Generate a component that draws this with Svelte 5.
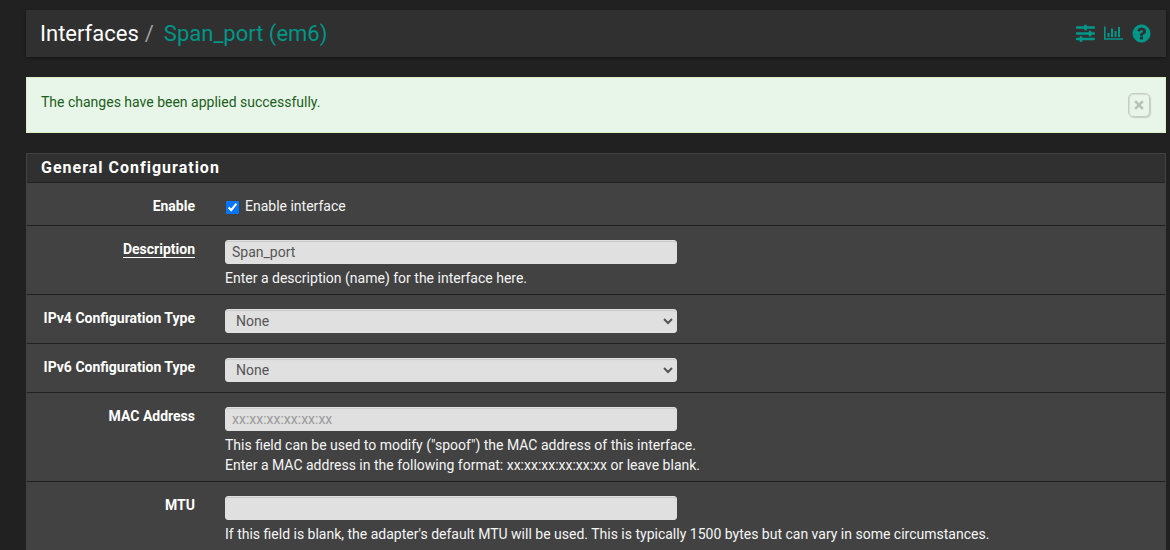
<script>
  let enabled = $state(true);
  let description = $state('Span_port');
  let ipv4 = $state('None');
  let ipv6 = $state('None');
  let mac = $state('');
  let mtu = $state('');
  let showAlert = $state(true);
  const types = ['None', 'Static', 'DHCP'];
</script>

<div class="page">
  <header class="title-bar">
    <h1>
      <a class="crumb" href="#interfaces">Interfaces</a>
      <span class="slash">/</span>
      <a class="current" href="#em6">Span_port (em6)</a>
    </h1>
    <nav class="tools">
      <a href="#settings" aria-label="Settings">
        <svg width="20" height="20" viewBox="0 0 20 20">
          <path d="M2 4.500h17M2 10.500h17M2 16h17" stroke="currentColor" stroke-width="2.400" stroke-linecap="round" />
          <path d="M10.500 3v3M15 9v3M6 14.500v3" stroke="currentColor" stroke-width="3" stroke-linecap="round" />
        </svg>
      </a>
      <a href="#graph" aria-label="Monitoring">
        <svg width="20" height="20" viewBox="0 0 20 20">
          <path d="M1.800 3.500v12.500H20" fill="none" stroke="currentColor" stroke-width="1.600" />
          <path d="M5.500 10v4M9 5.500v8.500M12.500 8v6M16 4v10" stroke="currentColor" stroke-width="2" />
        </svg>
      </a>
      <a href="#help" aria-label="Help">
        <svg width="21" height="21" viewBox="0 0 1792 1792">
          <path
            fill="currentColor"
            d="M1024 1376v-192q0-14-9-23t-23-9h-192q-14 0-23 9t-9 23v192q0 14 9 23t23 9h192q14 0 23-9t9-23zm256-672q0-88-55.500-163t-138.500-116-170-41q-243 0-371 213-15 24 8 42l132 100q7 6 19 6 16 0 25-12 53-68 86-92 34-24 86-24 48 0 85.500 26t37.500 59q0 38-20 61t-68 45q-63 28-115.500 86.500t-52.500 125.500v36q0 14 9 23t23 9h192q14 0 23-9t9-23q0-19 21.500-49.500t54.500-49.500q32-18 49-28.500t46-35 44.500-48 28-60.500 12.500-81zm384 192q0 209-103 385.500t-279.500 279.500-385.500 103-385.500-103-279.500-279.500-103-385.500 103-385.500 279.500-279.500 385.500-103 385.500 103 279.500 279.500 103 385.500z"
          />
        </svg>
      </a>
    </nav>
  </header>

  {#if showAlert}
    <div class="alert" role="status">
      <span>The changes have been applied successfully.</span>
      <button class="close" type="button" aria-label="Close" onclick={() => (showAlert = false)}>
        <svg width="10" height="10" viewBox="0 0 10 10">
          <path d="M1.200 1.200l7.600 7.600M8.800 1.200l-7.600 7.600" stroke="currentColor" stroke-width="2.600" />
        </svg>
      </button>
    </div>
  {/if}

  <form class="panel">
    <h2>General Configuration</h2>

    <div class="row">
      <label class="name" for="enable">Enable</label>
      <div class="field">
        <label class="check">
          <input id="enable" type="checkbox" bind:checked={enabled} />
          Enable interface
        </label>
      </div>
    </div>

    <div class="row">
      <label class="name" for="descr"><span class="required">Description</span></label>
      <div class="field">
        <input class="control" id="descr" type="text" bind:value={description} />
        <p>Enter a description (name) for the interface here.</p>
      </div>
    </div>

    <div class="row">
      <label class="name" for="type4">IPv4 Configuration Type</label>
      <div class="field">
        <select class="control" id="type4" bind:value={ipv4}>
          {#each types as type}<option>{type}</option>{/each}
        </select>
      </div>
    </div>

    <div class="row">
      <label class="name" for="type6">IPv6 Configuration Type</label>
      <div class="field">
        <select class="control" id="type6" bind:value={ipv6}>
          {#each types as type}<option>{type}</option>{/each}
        </select>
      </div>
    </div>

    <div class="row">
      <label class="name" for="mac">MAC Address</label>
      <div class="field">
        <input class="control" id="mac" type="text" placeholder="xx:xx:xx:xx:xx:xx" bind:value={mac} />
        <p>
          This field can be used to modify ("spoof") the MAC address of this interface.<br />
          Enter a MAC address in the following format: xx:xx:xx:xx:xx:xx or leave blank.
        </p>
      </div>
    </div>

    <div class="row">
      <label class="name" for="mtu">MTU</label>
      <div class="field">
        <input class="control" id="mtu" type="text" bind:value={mtu} />
        <p>
          If this field is blank, the adapter's default MTU will be used. This is typically 1500 bytes but can vary in
          some circumstances.
        </p>
      </div>
    </div>
  </form>
</div>

<style>
  :global(body) {
    margin: 0;
    background: #212121;
    color: #f5f5f5;
    font: 14px/20px Roboto, sans-serif;
  }

  .page {
    padding: 10px 4px 0 26px;
  }

  .title-bar {
    display: flex;
    align-items: center;
    justify-content: space-between;
    height: 47px;
    padding: 0 14px;
    box-sizing: border-box;
    margin-bottom: 20px;
    background: #303030;
    box-shadow: 0 1px 3px rgba(0, 0, 0, 0.4);
  }

  h1 {
    display: flex;
    margin: 0;
    font-size: 22px;
    line-height: 24px;
    font-weight: 400;
  }

  a {
    color: #009688;
    text-decoration: none;
  }

  .crumb {
    color: #fff;
  }

  .slash {
    margin: 0 10px 0 6px;
    color: #9e9e9e;
  }

  .tools {
    display: flex;
    gap: 8px;
  }

  svg {
    display: block;
  }

  .alert {
    display: flex;
    justify-content: space-between;
    align-items: flex-start;
    padding: 15px 15px 15px 14px;
    margin-bottom: 20px;
    border: 1px solid #dcedc8;
    background: #e8f5e9;
    color: #1b5e20;
    line-height: 18px;
  }

  .close {
    display: grid;
    place-items: center;
    box-sizing: border-box;
    width: 22px;
    height: 24px;
    padding: 0;
    border: 1px solid #c5cdc4;
    border-radius: 5px;
    background: transparent;
    box-shadow: 1px 1px 1px #c5cdc4, inset 1px 1px 1px #d5ddd4;
    color: #b7c1b7;
  }

  .panel {
    border: 1px solid #424242;
    border-bottom: 0;
    background: #424242;
  }

  h2 {
    margin: 0;
    padding: 4px 14px;
    border-bottom: 1px solid #212121;
    background: #303030;
    color: #fff;
    font-size: 16px;
    line-height: 20px;
    font-weight: 700;
    letter-spacing: 1px;
  }

  .row {
    display: grid;
    grid-template-columns: 183fr 955fr;
    padding: 14px 0 6px;
    border-bottom: 1px solid #212121;
  }

  .row:last-child {
    border-bottom: 0;
  }

  .name {
    padding-right: 15px;
    color: #fff;
    font-weight: 700;
    line-height: 18px;
    text-align: right;
  }

  .required {
    display: inline-block;
    line-height: 16px;
    border-bottom: 1px solid #fff;
  }

  .field {
    min-height: 22px;
    padding: 0 18px 0 15px;
  }

  .check {
    display: flex;
    gap: 6px;
    line-height: 18px;
  }

  .check input {
    width: 13px;
    height: 13px;
    margin: 4px 0 0 1px;
  }

  .control {
    display: block;
    box-sizing: border-box;
    width: 49%;
    height: 24px;
    margin: 0 0 4px;
    padding: 0 6px;
    border: 1px solid #e0e0e0;
    border-radius: 3px;
    background: #e0e0e0;
    box-shadow: inset 0 1px 1px rgba(0, 0, 0, 0.1);
    color: #555;
    font: inherit;
  }

  .control::placeholder {
    color: #999;
    opacity: 1;
  }

  p {
    margin: 0;
  }
</style>
